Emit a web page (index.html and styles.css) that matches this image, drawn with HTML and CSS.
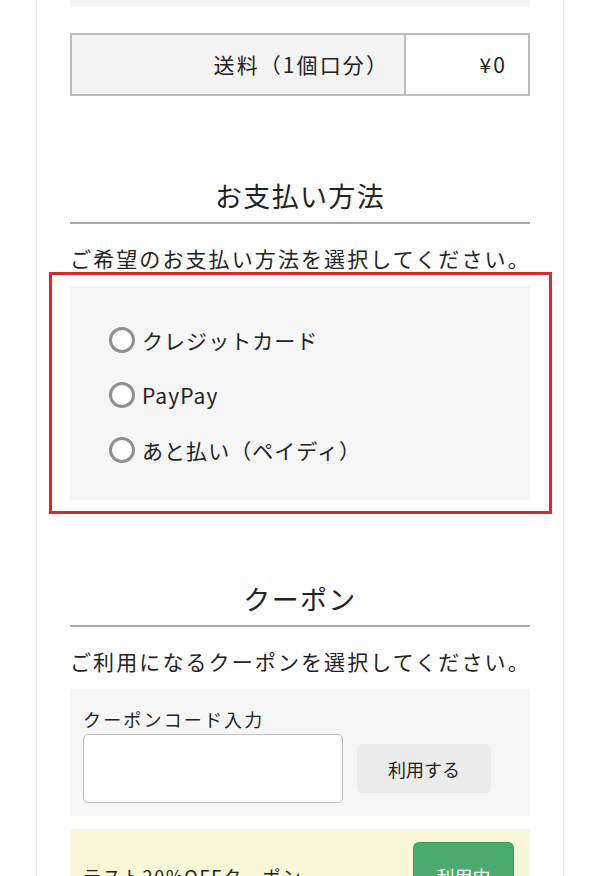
FILE: index.html
```html
<!DOCTYPE html>
<html lang="ja">
<head>
<meta charset="utf-8">
<title>お支払い方法</title>
<link rel="stylesheet" href="styles.css">
</head>
<body>
<div class="page">
  <div class="summary-tail"></div>

  <div class="fee-row">
    <div class="fee-label">送料（1個口分）</div>
    <div class="fee-value">¥0</div>
  </div>

  <section class="section section-payment">
    <h2 class="section-title">お支払い方法</h2>
    <p class="section-lead">ご希望のお支払い方法を選択してください。</p>
    <div class="panel pay-panel highlight">
      <label class="radio-row"><input type="radio" name="pay" class="radio"><span>クレジットカード</span></label>
      <label class="radio-row"><input type="radio" name="pay" class="radio"><span>PayPay</span></label>
      <label class="radio-row"><input type="radio" name="pay" class="radio"><span>あと払い（ペイディ）</span></label>
    </div>
  </section>

  <section class="section section-coupon">
    <h2 class="section-title">クーポン</h2>
    <p class="section-lead">ご利用になるクーポンを選択してください。</p>
    <div class="panel coupon-panel">
      <div class="coupon-label">クーポンコード入力</div>
      <div class="coupon-form">
        <input type="text" class="coupon-input">
        <button class="btn btn-gray">利用する</button>
      </div>
    </div>
    <div class="coupon-item">
      <span class="coupon-name">テスト20%OFFクーポン</span>
      <button class="btn btn-green">利用中</button>
    </div>
  </section>
</div>
</body>
</html>
```

FILE: styles.css
```css
html, body {
  margin: 0;
  padding: 0;
  background: #fff;
}
body {
  font-family: "Noto Sans CJK JP", "Noto Sans", sans-serif;
  color: #222;
  font-size: 21px;
  letter-spacing: 0.1em;
}
.page {
  box-sizing: border-box;
  width: 528px;
  min-height: 1200px;
  margin: 0 auto;
  padding: 0 33px 40px;
  border-left: 1px solid #e4e4e4;
  border-right: 1px solid #e4e4e4;
}
.summary-tail {
  height: 7px;
  background: #f5f5f5;
}
.fee-row {
  box-sizing: border-box;
  display: grid;
  grid-template-columns: 1fr 124px;
  height: 63px;
  margin-top: 26px;
  border: 2px solid #bcbcbc;
}
.fee-label, .fee-value {
  display: flex;
  align-items: center;
  justify-content: flex-end;
  line-height: 1;
}
.fee-label {
  background: #f4f4f4;
  padding-right: 15px;
}
.fee-value {
  border-left: 2px solid #bcbcbc;
  padding-right: 21px;
}
.section-payment { margin-top: 80px; }
.section-coupon { margin-top: 79px; }
.section-title {
  margin: 0;
  font-size: 27px;
  font-weight: 400;
  letter-spacing: 0.05em;
  line-height: 40px;
  text-align: center;
  padding-bottom: 6px;
  border-bottom: 2px solid #a8a8a8;
}
.section-lead {
  margin: 18px 0 0;
  line-height: 32px;
  font-size: 21px;
  white-space: nowrap;
}
.panel {
  background: #f6f6f6;
  margin-top: 12px;
}
.pay-panel {
  padding: 26px 0 23px 39px;
}
.highlight {
  position: relative;
}
.highlight::after {
  content: "";
  position: absolute;
  top: -14px;
  bottom: -14px;
  left: -21px;
  right: -22px;
  border: 3px solid #d12c2c;
  pointer-events: none;
}
.radio-row {
  display: flex;
  align-items: center;
  height: 55px;
  font-size: 21px;
  letter-spacing: 0.05em;
}
.radio {
  -webkit-appearance: none;
  appearance: none;
  box-sizing: border-box;
  width: 26px;
  height: 26px;
  margin: 0 7px 0 0;
  border: 3px solid #8f8f8f;
  border-radius: 50%;
  background: #fff;
}
.coupon-panel {
  padding: 17px 13px 13px;
}
.coupon-label {
  font-size: 18px;
  letter-spacing: 0.12em;
  line-height: 27px;
  margin-bottom: 1px;
}
.coupon-form {
  display: flex;
  align-items: center;
}
.coupon-input {
  box-sizing: border-box;
  width: 260px;
  height: 69px;
  margin: 0;
  border: 1px solid #bdbdbd;
  border-radius: 5px;
  background: #fff;
}
.btn {
  font-family: "Noto Sans CJK JP", "Noto Sans", sans-serif;
  font-size: 18px;
  letter-spacing: 0;
  border: none;
  border-radius: 5px;
  padding: 0;
}
.btn-gray {
  width: 134px;
  height: 49px;
  margin-left: 14px;
  background: #ebebeb;
  color: #222;
}
.coupon-item {
  display: flex;
  align-items: center;
  justify-content: space-between;
  margin-top: 13px;
  padding: 14px 17px 14px 13px;
  background: #f8f7d6;
}
.coupon-name {
  font-size: 18px;
  letter-spacing: 0.1em;
}
.btn-green {
  width: 99px;
  height: 66px;
  background: #4caa6f;
  color: #fff;
  box-shadow: 0 0 0 1px #3f9a60;
}
```
